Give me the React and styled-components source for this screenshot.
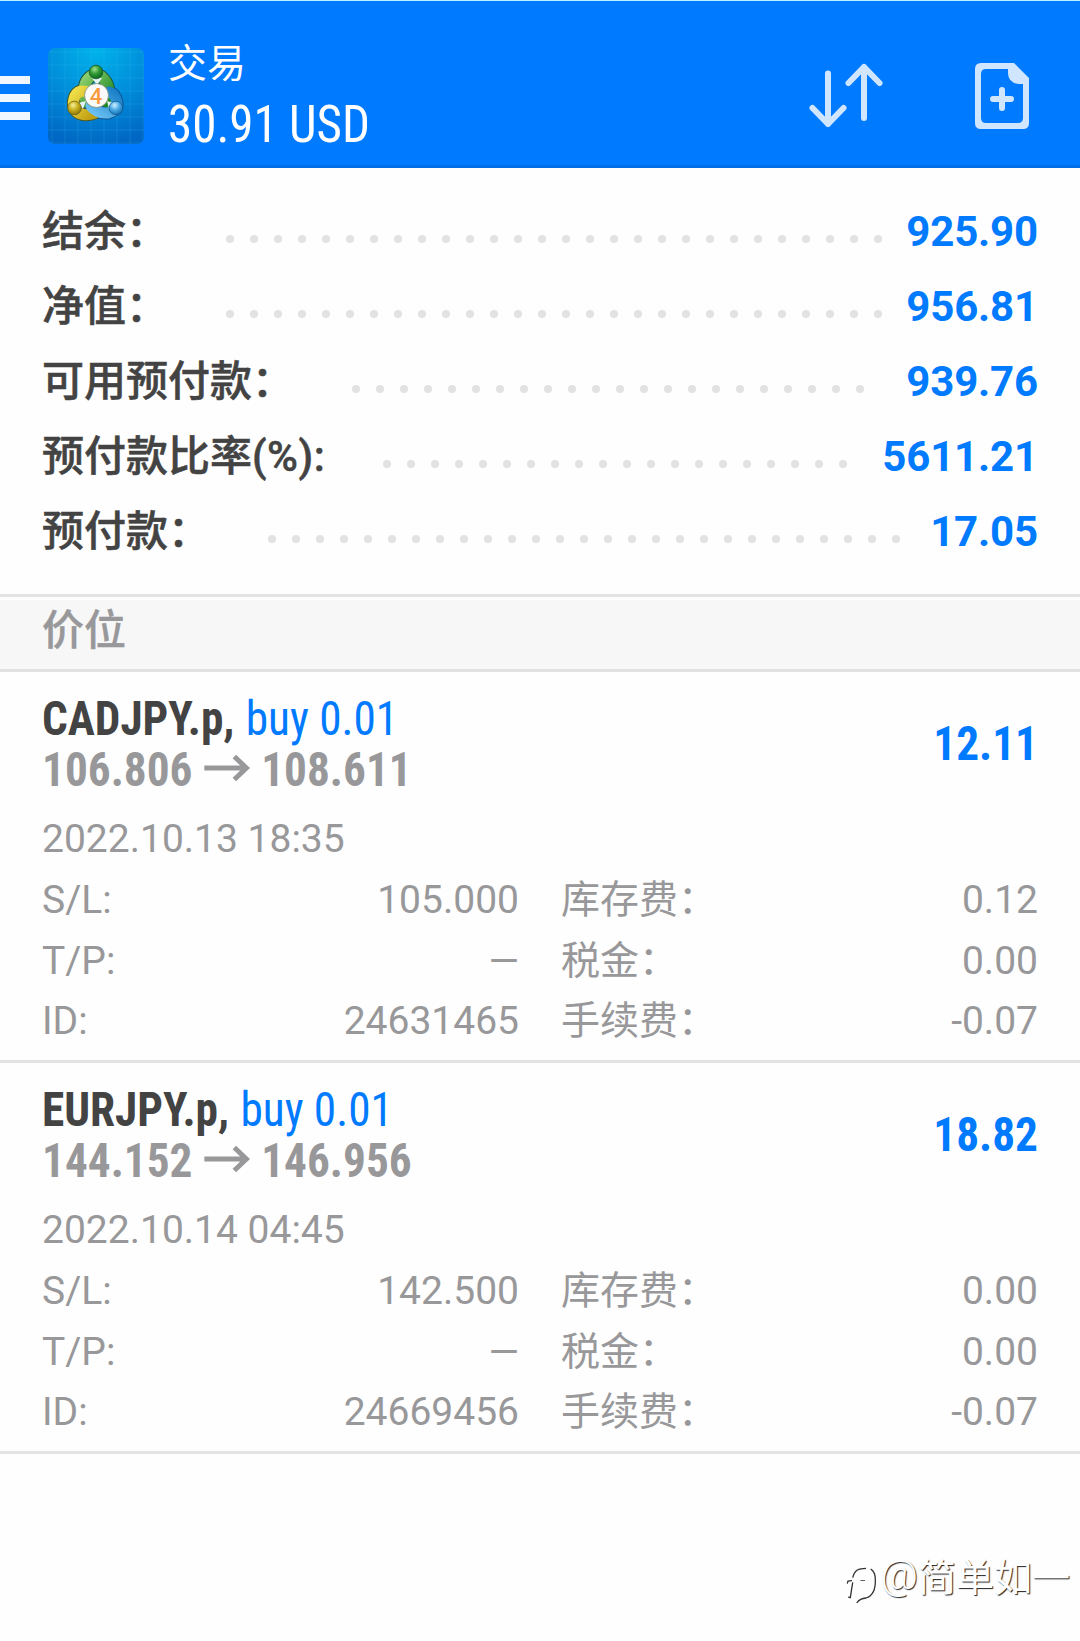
import React from "react";
import styled, { createGlobalStyle } from "styled-components";

const BLUE = "#007aff";
const GREY = "#98989a";
const DARK = "#434343";

const GlobalStyle = createGlobalStyle`
  * { box-sizing: border-box; }
  body {
    margin: 0;
    background: #fff;
    font-family: Roboto, "Noto Sans CJK SC", sans-serif;
  }
`;

const Screen = styled.div`
  width: 1080px;
  height: 1641px;
  display: flex;
  flex-direction: column;
  overflow: hidden;
  background: #fefefe;
`;

const Header = styled.header`
  display: flex;
  height: 168px;
  flex: none;
  background: ${BLUE};
  border-top: 1px solid #b9f3ff;
  border-bottom: 3px solid #006fe6;
  color: #fff;
`;

const MenuButton = styled.div`
  width: 30px;
  margin: 75px 18px 0 0;
  display: flex;
  flex-direction: column;
  gap: 10px;
`;

const MenuBar = styled.div`
  height: 8px;
  background: #f0f7ff;
`;

const Logo = styled.svg`
  width: 96px;
  height: 96px;
  margin-top: 47px;
  border-radius: 7px;
`;

const TitleBlock = styled.div`
  flex: 1;
  padding: 38px 0 0 24px;
`;

const Title = styled.div`
  font-size: 39px;
  line-height: 50px;
`;

const Condensed = styled.div`
  font-family: "Roboto Condensed", Roboto, "Noto Sans CJK SC", sans-serif;
  font-stretch: 75%;
  white-space: nowrap;
  transform: scaleX(0.943);
  transform-origin: ${(p) => p.$origin || "left"} center;
`;

const Total = styled(Condensed)`
  margin-top: 6px;
  font-size: 52px;
  line-height: 60px;
`;

const Actions = styled.div`
  display: flex;
  gap: 88px;
  padding: 59px 48px 0 0;
`;

const ActionIcon = styled.svg`
  width: ${(p) => p.$w}px;
  height: 72px;
`;

const Summary = styled.section`
  height: 429px;
  flex: none;
  padding: 26px 42px 0;
  border-bottom: 3px solid #e3e3e3;
`;

const SummaryRow = styled.div`
  display: flex;
  height: 75px;
  font-size: 42px;
  line-height: 75px;
`;

const SummaryLabel = styled.div`
  font-weight: 500;
  color: ${DARK};
  -webkit-text-stroke: 0.5px ${DARK};
`;

const Latin = styled.span`
  letter-spacing: 0.5px;
`;

const Leader = styled.div`
  flex: 1;
  height: 8px;
  margin: 41px 20px 0 58px;
  display: flex;
  flex-wrap: wrap;
  gap: 16px;
  overflow: hidden;
`;

const Dot = styled.span`
  width: 8px;
  height: 8px;
  border-radius: 50%;
  background: #e2e2e2;
`;

const SummaryValue = styled.div`
  font-weight: 700;
  letter-spacing: -0.15px;
  color: ${BLUE};
`;

const SectionTitle = styled.h2`
  height: 72px;
  flex: none;
  margin: 3px 0 0;
  padding: 0 42px;
  background: #f7f7f7;
  border-bottom: 3px solid #e1e1e1;
  font-size: 42px;
  font-weight: 500;
  line-height: 62px;
  color: ${GREY};
  -webkit-text-stroke: 0.4px ${GREY};
`;

const Position = styled.article`
  height: 391px;
  flex: none;
  padding: 21px 42px 0;
  border-bottom: 3px solid #e3e3e3;
`;

const PositionHead = styled.div`
  display: flex;
  justify-content: space-between;
  align-items: center;
  margin-bottom: 14px;
`;

const HeadLine = styled(Condensed)`
  display: flex;
  align-items: center;
  height: 51px;
  font-size: 48px;
  font-weight: 700;
  line-height: 51px;
  color: ${(p) => p.$color};
`;

const Profit = styled(HeadLine)`
  margin-top: -2px;
`;

const Side = styled.span`
  margin-left: 12px;
  font-weight: 400;
  color: ${BLUE};
`;

const Arrow = styled.svg`
  width: 49px;
  height: 28px;
  margin: -4px 12px 0 12px;
`;

const Details = styled.div`
  display: grid;
  grid-template-columns: 1fr 1fr;
  column-gap: 42px;
  font-size: 39px;
  line-height: 60.8px;
  color: ${GREY};
`;

const OpenTime = styled.div`
  grid-column: 1 / -1;
`;

const Field = styled.div`
  display: flex;
  justify-content: space-between;
`;

const Watermark = styled.footer`
  display: flex;
  justify-content: flex-end;
  align-items: center;
  margin-top: auto;
  padding: 0 10px 35px 0;
  font-family: "Noto Sans CJK SC", sans-serif;
  font-size: 38px;
  line-height: 60px;
  color: #fff;
  text-shadow: 1px 1px 1px #222;
`;

const AtSign = styled.span`
  font-family: Roboto, sans-serif;
  font-size: 41px;
  font-weight: 300;
`;

const WatermarkLogo = styled.svg`
  width: 32px;
  height: 40px;
  margin: 22px 3px 0 0;
`;

const summary = [
  ["结余：", "", "925.90"],
  ["净值：", "", "956.81"],
  ["可用预付款：", "", "939.76"],
  ["预付款比率", "(%):", "5611.21"],
  ["预付款：", "", "17.05"],
];

const positions = [
  {
    symbol: "CADJPY.p,", side: "buy 0.01", open: "106.806", now: "108.611", profit: "12.11",
    time: "2022.10.13 18:35",
    fields: [["S/L:", "105.000"], ["库存费：", "0.12"], ["T/P:", "—"], ["税金：", "0.00"], ["ID:", "24631465"], ["手续费：", "-0.07"]],
  },
  {
    symbol: "EURJPY.p,", side: "buy 0.01", open: "144.152", now: "146.956", profit: "18.82",
    time: "2022.10.14 04:45",
    fields: [["S/L:", "142.500"], ["库存费：", "0.00"], ["T/P:", "—"], ["税金：", "0.00"], ["ID:", "24669456"], ["手续费：", "-0.07"]],
  },
];

const gridLines = [4, 17, 30, 43, 56, 69, 82, 95];

function AppLogo() {
  return (
    <Logo viewBox="0 0 96 96">
      <defs>
        <radialGradient id="bg" cx="50%" cy="0%" r="100%">
          <stop offset="0" stopColor="#00b4ea" />
          <stop offset="0.5" stopColor="#0090dc" />
          <stop offset="1" stopColor="#0068c4" />
        </radialGradient>
        <linearGradient id="green" x1="0" y1="0" x2="1" y2="1">
          <stop offset="0" stopColor="#8fd070" />
          <stop offset="1" stopColor="#1d8a22" />
        </linearGradient>
        <linearGradient id="yellow" x1="0" y1="0" x2="1" y2="1">
          <stop offset="0" stopColor="#efe04a" />
          <stop offset="1" stopColor="#c09c10" />
        </linearGradient>
        <linearGradient id="blue" x1="0" y1="1" x2="1" y2="0">
          <stop offset="0" stopColor="#6cc2f4" />
          <stop offset="1" stopColor="#1a7fc8" />
        </linearGradient>
        <radialGradient id="greenBall" cx="40%" cy="30%" r="70%">
          <stop offset="0" stopColor="#a4e08e" />
          <stop offset="0.5" stopColor="#2f9a35" />
          <stop offset="1" stopColor="#0d6a1c" />
        </radialGradient>
        <radialGradient id="yellowBall" cx="40%" cy="30%" r="70%">
          <stop offset="0" stopColor="#f6ee96" />
          <stop offset="0.5" stopColor="#c9b01e" />
          <stop offset="1" stopColor="#8f7708" />
        </radialGradient>
        <radialGradient id="blueBall" cx="40%" cy="30%" r="70%">
          <stop offset="0" stopColor="#d0f0ff" />
          <stop offset="0.5" stopColor="#4aabe6" />
          <stop offset="1" stopColor="#1470b4" />
        </radialGradient>
      </defs>
      <rect width="96" height="96" fill="url(#bg)" />
      <g stroke="#3fc0f0" strokeOpacity="0.2" strokeWidth="1">
        {gridLines.map((v) => (
          <path key={v} d={`M${v} 0V96M0 ${v}H96`} />
        ))}
      </g>
      <g fill="none" strokeLinecap="round">
        <path d="M38 54Q33 36 42 29Q48 24 54 29Q64 38 59 54" stroke="#1c5a44" strokeWidth="13" />
        <path d="M43 45Q31 40 27 48Q23 58 29 64Q36 69 47 65" stroke="#4c5a24" strokeWidth="13" />
        <path d="M43 58Q49 66 60 65Q70 62 69 55Q68 46 61 44" stroke="#0f5490" strokeWidth="13" />
        <path d="M38 54Q33 36 42 29Q48 24 54 29Q64 38 59 54" stroke="url(#green)" strokeWidth="11" />
        <path d="M43 45Q31 40 27 48Q23 58 29 64Q36 69 47 65" stroke="url(#yellow)" strokeWidth="11" />
        <path d="M43 58Q49 66 60 65Q70 62 69 55Q68 46 61 44" stroke="url(#blue)" strokeWidth="11" />
      </g>
      <path d="M44 30L49 37L54 30ZM30 55L38 53L35 61ZM66 55L59 53L61 61Z" fill="#e3f2f5" />
      <circle cx="48" cy="24" r="6.8" fill="url(#greenBall)" stroke="#14562a" strokeWidth="0.8" />
      <circle cx="26.500" cy="60" r="6.8" fill="url(#yellowBall)" stroke="#6b6418" strokeWidth="0.8" />
      <circle cx="68" cy="60" r="6.8" fill="url(#blueBall)" stroke="#145a94" strokeWidth="0.8" />
      <circle cx="48.500" cy="47.500" r="12" fill="#fbfafa" stroke="#7a8a70" strokeWidth="0.8" />
      <text x="48" y="55.500" textAnchor="middle" fontFamily="Roboto" fontSize="22" fontWeight="500" fill="#f79b3e">4</text>
    </Logo>
  );
}

export default function App() {
  return (
    <Screen>
      <GlobalStyle />
      <Header>
        <MenuButton>
          <MenuBar />
          <MenuBar />
          <MenuBar />
        </MenuButton>
        <AppLogo />
        <TitleBlock>
          <Title>交易</Title>
          <Total>30.91 USD</Total>
        </TitleBlock>
        <Actions>
          <ActionIcon $w={78} viewBox="0 0 78 72" fill="none" stroke="#d0e6ff" strokeWidth="6" strokeLinecap="round" strokeLinejoin="round">
            <path d="M22 13.500V64M6.500 48L22 64L37.500 48M58 58V7M42.500 23L58 7L73.500 23" />
          </ActionIcon>
          <ActionIcon $w={60} viewBox="0 0 60 72" fill="none">
            <path d="M9 3H42L57 18V63Q57 69 51 69H9Q3 69 3 63V9Q3 3 9 3ZM14 9Q9 9 9 14V58Q9 63 14 63H46Q51 63 51 58V24H47Q36 23 36 13V9Z" fill="#d0e6ff" fillRule="evenodd" />
            <path d="M30 30V48M21 39H39" stroke="#d0e6ff" strokeWidth="6" strokeLinecap="round" />
          </ActionIcon>
        </Actions>
      </Header>
      <Summary>
        {summary.map(([label, suffix, value]) => (
          <SummaryRow key={label}>
            <SummaryLabel>
              {label}
              {suffix && <Latin>{suffix}</Latin>}
            </SummaryLabel>
            <Leader>
              {Array.from({ length: 30 }, (_, i) => <Dot key={i} />)}
            </Leader>
            <SummaryValue>{value}</SummaryValue>
          </SummaryRow>
        ))}
      </Summary>
      <SectionTitle>价位</SectionTitle>
      {positions.map((p) => (
        <Position key={p.symbol}>
          <PositionHead>
            <div>
              <HeadLine $color={DARK}>
                {p.symbol}
                <Side>{p.side}</Side>
              </HeadLine>
              <HeadLine $color={GREY}>
                {p.open}
                <Arrow viewBox="0 0 46 28" preserveAspectRatio="none" fill="none" stroke={GREY} strokeWidth="5">
                  <path d="M0 14H42M30 2.500L42 14L30 25.500" />
                </Arrow>
                {p.now}
              </HeadLine>
            </div>
            <Profit $color={BLUE} $origin="right">{p.profit}</Profit>
          </PositionHead>
          <Details>
            <OpenTime>{p.time}</OpenTime>
            {p.fields.map(([label, value]) => (
              <Field key={label}>
                <span>{label}</span>
                <span>{value}</span>
              </Field>
            ))}
          </Details>
        </Position>
      ))}
      <Watermark>
        <WatermarkLogo viewBox="0 0 32 40" fill="none" stroke="#333" strokeWidth="1.300">
          <path d="M1.300 17.700L2 15L6 14.700M6.700 16.300L4.300 31.700L2 31M6.700 11.700C8.700 3.700 12.700 2.300 20 2.300M24.700 3Q29.300 6 29.300 13Q30 29 20 32Q14 32.300 10.700 37" />
          <path d="M14.500 14.500H19" strokeWidth="0.8" />
        </WatermarkLogo>
        <AtSign>@</AtSign>
        <span>简单如一</span>
      </Watermark>
    </Screen>
  );
}
